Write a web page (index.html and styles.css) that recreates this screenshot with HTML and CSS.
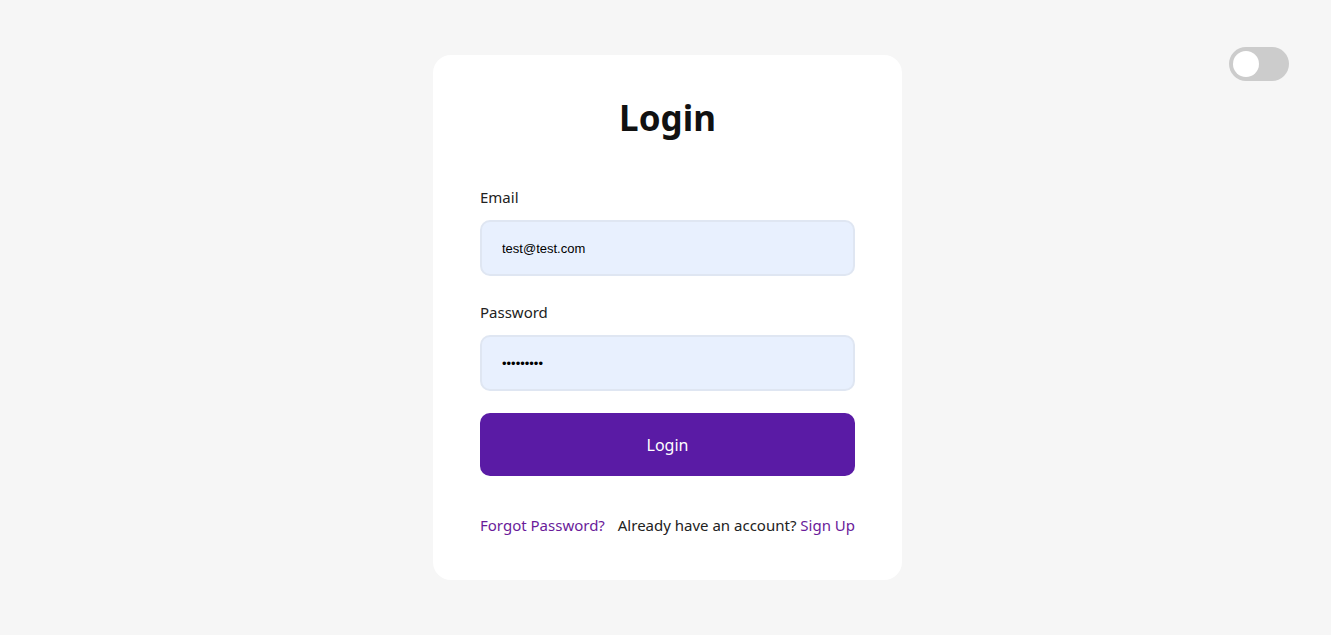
FILE: index.html
```html
<!DOCTYPE html>
<html lang="en">
<head>
  <meta charset="UTF-8" />
  <meta name="viewport" content="width=device-width, initial-scale=1.0"/>
  <title>Login</title>
  <link rel="stylesheet" href="styles.css">
</head>
<body>

<label class="theme-switch">
  <input type="checkbox" />
  <span class="slider"></span>
</label>

<div class="card">
  <h2>Login</h2>

  <form id="loginForm">
    <label for="email">Email</label>
    <input type="email" id="email" value="test@test.com" />

    <label for="password">Password</label>
    <input type="password" id="password" value="123456789" />

    <button type="submit">Login</button>
  </form>

  <div class="links">
    <a href="#">Forgot Password?</a>
    <span>Already have an account? <a href="#">Sign Up</a></span>
  </div>
</div>

</body>
</html>
```

FILE: styles.css
```css
    body {
      font-family: "Noto Sans", "Noto Sans CJK KR", sans-serif;
      background: #f6f6f6;
      margin: 0;
      padding-left: 4px;
      height: 100vh;
      display: flex;
      align-items: center;
      justify-content: center;
      color: #222;
    }

    .card {
      background: #fff;
      width: 375px;
      padding: 47px 47px 44px;
      border-radius: 18px;
      box-sizing: content-box;
    }

    h2 {
      text-align: center;
      font-size: 35px;
      line-height: 32px;
      margin: 0 0 53px;
      color: #111;
    }

    label {
      display: block;
      font-size: 15px;
      line-height: 20px;
      margin-bottom: 13px;
    }

    input {
      display: block;
      width: 100%;
      box-sizing: border-box;
      height: 56px;
      padding: 0 20px;
      margin: 0 0 26px;
      border: 2px solid #dfe6f2;
      border-radius: 10px;
      background: #e8f0fe;
      font-family: "Liberation Sans", Arial, sans-serif;
      font-size: 13px;
      color: #000;
    }

    #password {
      margin-bottom: 22px;
    }

    button {
      display: block;
      width: 100%;
      height: 63px;
      border: none;
      border-radius: 10px;
      background: #5a1ba5;
      color: #fff;
      font-family: inherit;
      font-size: 16px;
      cursor: pointer;
    }

    .links {
      display: flex;
      justify-content: space-between;
      margin-top: 38px;
      font-size: 15px;
      line-height: 22px;
    }

    .links a {
      color: #6a1b9a;
      text-decoration: none;
    }

    .theme-switch {
      position: absolute;
      top: 47px;
      right: 42px;
      width: 60px;
      height: 34px;
      margin: 0;
    }

    .theme-switch input {
      display: none;
    }

    .slider {
      position: absolute;
      inset: 0;
      background: #ccc;
      border-radius: 17px;
    }

    .slider::before {
      content: "";
      position: absolute;
      left: 4px;
      top: 4px;
      width: 26px;
      height: 26px;
      border-radius: 50%;
      background: #fff;
    }
```
